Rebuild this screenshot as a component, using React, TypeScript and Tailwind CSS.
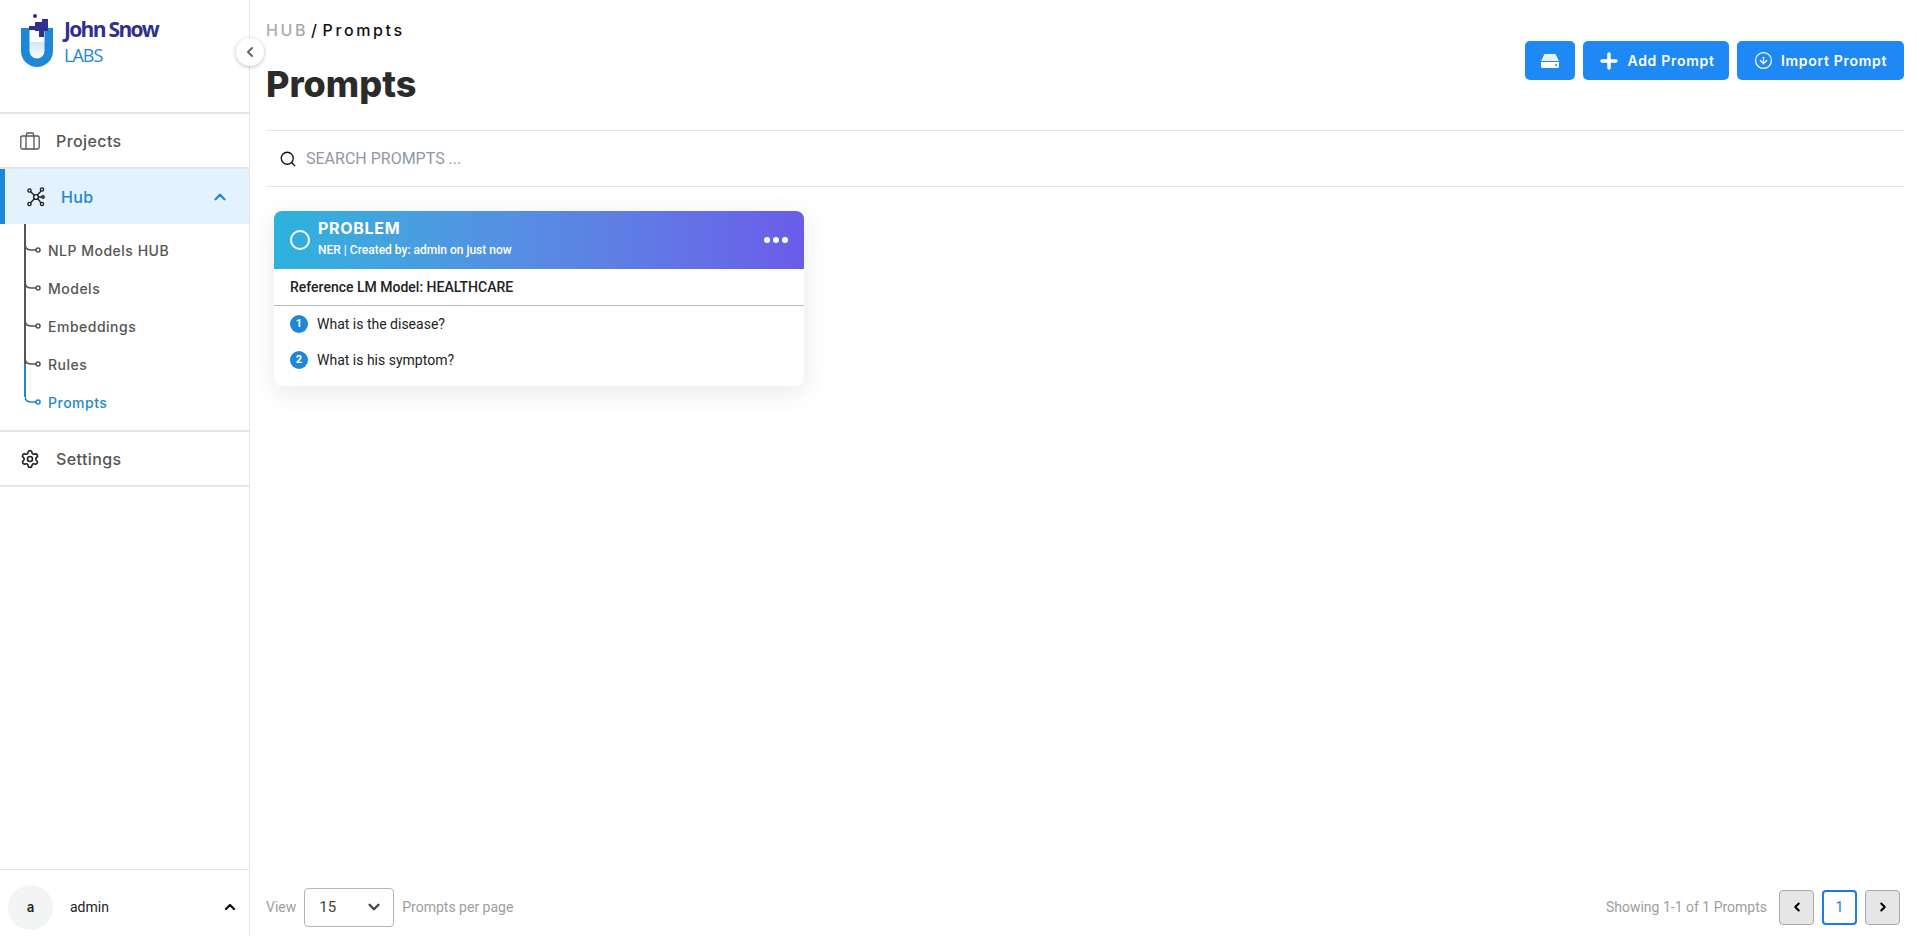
import { ChevronDown, ChevronLeft, ChevronRight, ChevronUp, CircleArrowDown, Plus, Search, Settings } from "lucide-react";

const subItems = ["NLP Models HUB", "Models", "Embeddings", "Rules"];

const Logo = () => (
  <div className="flex items-start gap-[10px]">
    <svg width="34" height="54" viewBox="0 0 34 54" className="mt-[-1px]">
      <defs>
        <linearGradient id="tube" x1="0" y1="0" x2="0" y2="1">
          <stop offset="0" stopColor="#cfe8f8" />
          <stop offset="1" stopColor="#f3fafe" />
        </linearGradient>
      </defs>
      <rect x="9" y="28" width="16" height="14" fill="url(#tube)" />
      <path d="M1 14h8.5v23a7.5 7.5 0 0 0 15 0V14H33v23a16 16 0 0 1-32 0z" fill="#1e88d6" />
      <rect x="13" y="0" width="4" height="4" rx="2" fill="#2f2f8f" />
      <path d="M9 12h6V8h7V5h6v12h-4v6h-5v-6h-4v-1H9z" fill="#2f2f8f" />
    </svg>
    <div className="flex flex-col font-['Open_Sans',sans-serif]">
      <span className="mt-[1px] text-[21px] font-bold leading-[26px] tracking-[-1.7px] text-[#2f2f8f]">John Snow</span>
      <span className="mt-[1px] text-[18px] leading-[24px] tracking-[-1px] text-[#1e88d6]">LABS</span>
    </div>
  </div>
);

const HubIcon = () => (
  <svg width="18" height="20" viewBox="0 0 18 20" fill="none" stroke="#222" strokeWidth="1.4">
    <circle cx="9" cy="10" r="2.4" />
    <circle cx="2.5" cy="3.5" r="1.6" />
    <circle cx="15" cy="2.5" r="1.6" />
    <circle cx="2.5" cy="17" r="1.6" />
    <circle cx="15" cy="17" r="1.6" />
    <circle cx="16" cy="10" r="1.2" />
    <path d="M3.7 4.7 7.3 8.3M14.2 4 10.2 8M3.7 15.8 7.3 11.7M14 16 10.8 11.7M11.4 10H15" />
  </svg>
);

const BriefcaseIcon = () => (
  <svg width="20" height="18" viewBox="0 0 20 18" fill="none" stroke="#555" strokeWidth="1.3">
    <rect x="0.8" y="4" width="18.4" height="13" rx="1.5" />
    <path d="M6 17V4M14 17V4M6.5 4V2a1 1 0 0 1 1-1h5a1 1 0 0 1 1 1v2" />
  </svg>
);

const DriveIcon = () => (
  <svg width="18" height="14" viewBox="0 0 18 14">
    <path d="M3.5 0h11L18 7H0z" fill="#e8f1fb" />
    <path d="M0 8h18v4.5a1.5 1.5 0 0 1-1.5 1.5h-15A1.5 1.5 0 0 1 0 12.5z" fill="#fff" />
    <circle cx="15" cy="11" r="1" fill="#1e88f5" />
  </svg>
);

const TreeBranch = ({ active }: { active?: boolean }) => (
  <svg width="16" height="14" viewBox="0 0 16 14" fill="none" stroke={active ? "#1e88d6" : "#555"} strokeWidth="1.6" className="shrink-0">
    <path d="M0 1c0 4 2 6 6 6h5" />
    <circle cx="13" cy="7" r="2" fill="#fff" />
  </svg>
);

const App = () => {
  return (
    <div className="flex h-[936px] w-[1916px] overflow-hidden bg-white font-['Roboto',sans-serif]">
      <aside className="relative flex w-[250px] shrink-0 flex-col border-r border-[#e5e5e5]">
        <div className="h-[112px] shrink-0 pl-[20px] pt-[15px]">
          <Logo />
        </div>
        <button className="absolute right-[-15px] top-[38px] flex h-[28px] w-[28px] items-center justify-center rounded-full bg-white shadow-[0_1px_4px_rgba(0,0,0,0.25)]">
          <ChevronLeft size={16} strokeWidth={3} className="text-[#666]" />
        </button>
        <nav className="font-['Inter',sans-serif]">
          <div className="flex h-[57px] items-center gap-[16px] border-y-2 border-[#e5e5e5] pl-[20px] text-[16px] font-medium tracking-[0.4px] text-[#555]">
            <BriefcaseIcon />
            Projects
          </div>
          <div className="flex h-[55px] items-center border-l-[5px] border-[#1e88d6] bg-[#e3f2fd] pl-[22px] pr-[20px] text-[16px] font-medium tracking-[0.4px] text-[#1e88d6]">
            <HubIcon />
            <span className="ml-[16px] flex-1">Hub</span>
            <ChevronUp size={18} strokeWidth={3} />
          </div>
          <ul className="relative h-[206px] pt-[7px] text-[14px] font-medium tracking-[0.5px] text-[#555]">
            <span className="absolute left-[24px] top-0 h-[140px] w-[2px] bg-[#555]" />
            <span className="absolute left-[24px] top-[140px] h-[33px] w-[2px] bg-[#1e88d6]" />
            {subItems.map((item) => (
              <li key={item} className="flex h-[38px] items-center gap-[7px] pl-[25px]">
                <TreeBranch />
                {item}
              </li>
            ))}
            <li className="flex h-[38px] items-center gap-[7px] pl-[25px] text-[#1e88d6]">
              <TreeBranch active />
              Prompts
            </li>
          </ul>
          <div className="flex h-[57px] items-center gap-[16px] border-y-2 border-[#e5e5e5] pl-[20px] text-[16px] font-medium tracking-[0.4px] text-[#555]">
            <Settings size={20} className="text-[#222]" />
            Settings
          </div>
        </nav>
        <div className="mt-auto flex h-[67px] items-center border-t border-[#e5e5e5] pl-[8px] pr-[11px] pt-[8px]">
          <div className="flex h-[45px] w-[45px] items-center justify-center rounded-full bg-[#f3f4f4] text-[14px] font-medium text-[#222]">a</div>
          <span className="ml-[17px] flex-1 text-[14px] text-[#222]">admin</span>
          <ChevronUp size={16} strokeWidth={3.5} className="text-[#111]" />
        </div>
      </aside>

      <main className="flex min-w-0 flex-1 flex-col pl-[16px] pr-[12px]">
        <header className="flex h-[131px] shrink-0 justify-between border-b border-[#e1e4e8]">
          <div className="font-['Inter',sans-serif]">
            <div className="mt-[21px] flex gap-[3px] text-[16px] font-medium leading-[18px] tracking-[2.6px]">
              <span className="text-[#aaa]">HUB</span>
              <span className="text-[#111]">/</span>
              <span className="text-[#111]">Prompts</span>
            </div>
            <h1 className="mt-[23px] text-[36px] font-extrabold leading-[44px] text-[#2b2b2b]">Prompts</h1>
          </div>
          <div className="mt-[41px] flex h-[39px] gap-[8px] font-['Inter',sans-serif] text-[14px] font-semibold tracking-[0.7px] text-white">
            <button className="flex w-[50px] items-center justify-center rounded-[5px] bg-[#1e88f5]"><DriveIcon /></button>
            <button className="flex w-[146px] items-center justify-center gap-[6px] rounded-[5px] bg-[#1e88f5]"><Plus size={24} strokeWidth={3.5} />Add Prompt</button>
            <button className="flex w-[167px] items-center justify-center gap-[8px] rounded-[5px] bg-[#1e88f5]"><CircleArrowDown size={19} strokeWidth={1.6} />Import Prompt</button>
          </div>
        </header>

        <div className="flex h-[56px] shrink-0 items-center gap-[9px] border-b border-[#e1e4e8] pl-[13px]">
          <Search size={18} strokeWidth={1.7} className="text-[#111]" />
          <span className="text-[16px] text-[#8f98a6]">SEARCH PROMPTS ...</span>
        </div>

        <div className="flex-1 pl-[8px] pt-[24px]">
          <article className="w-[530px] overflow-hidden rounded-[8px] bg-white shadow-[0_6px_24px_rgba(60,70,100,0.12)]">
            <div className="flex h-[58px] items-center bg-gradient-to-r from-[#2bb3dc] to-[#6a5ce8] pl-[16px] pr-[16px] text-white">
              <span className="h-[20px] w-[20px] rounded-full border-2 border-white" />
              <div className="ml-[8px] flex-1 pb-[5px]">
                <div className="font-['Inter',sans-serif] text-[16px] font-bold leading-[20px] tracking-[0.7px]">PROBLEM</div>
                <div className="mt-[5px] text-[12px] font-medium leading-[14px]">NER | Created by: admin on just now</div>
              </div>
              <div className="flex gap-[3px]">
                <span className="h-[6px] w-[6px] rounded-full bg-white" />
                <span className="h-[6px] w-[6px] rounded-full bg-white" />
                <span className="h-[6px] w-[6px] rounded-full bg-white" />
              </div>
            </div>
            <div className="flex h-[37px] items-center border-b border-[#bbb] pl-[16px] text-[14px] font-medium text-[#222]">Reference LM Model: HEALTHCARE</div>
            <ul className="h-[80px] pl-[16px] text-[14px] text-[#222]">
              <li className="flex h-[36px] items-center gap-[9px]">
                <span className="flex h-[18px] w-[18px] items-center justify-center rounded-full bg-[#1e88d6] text-[11px] font-bold text-white">1</span>
                What is the disease?
              </li>
              <li className="flex h-[36px] items-center gap-[9px]">
                <span className="flex h-[18px] w-[18px] items-center justify-center rounded-full bg-[#1e88d6] text-[11px] font-bold text-white">2</span>
                What is his symptom?
              </li>
            </ul>
          </article>
        </div>

        <footer className="flex h-[67px] shrink-0 items-center justify-between pt-[9px] text-[14px] text-[#9e9e9e]">
          <div className="flex items-center">
            <span>View</span>
            <div className="ml-[8px] flex h-[39px] w-[90px] items-center justify-between rounded-[4px] border border-[#b5b5b5] pl-[14px] pr-[10px] text-[15px] text-[#444]">
              15
              <ChevronDown size={18} strokeWidth={3} className="text-[#444]" />
            </div>
            <span className="ml-[8px]">Prompts per page</span>
          </div>
          <div className="flex items-center pr-[4px]">
            <span className="mr-[12px]">Showing 1-1 of 1 Prompts</span>
            <button className="flex h-[35px] w-[35px] items-center justify-center rounded-[4px] border border-[#a8a8a8] bg-[#e6e6e6] text-black"><ChevronLeft size={14} strokeWidth={3.5} /></button>
            <button className="mx-[8px] flex h-[35px] w-[35px] items-center justify-center rounded-[4px] border-2 border-[#1e78e6] bg-white text-[#1e78e6]">1</button>
            <button className="flex h-[35px] w-[35px] items-center justify-center rounded-[4px] border border-[#a8a8a8] bg-[#e6e6e6] text-black"><ChevronRight size={14} strokeWidth={3.5} /></button>
          </div>
        </footer>
      </main>
    </div>
  );
};

export default App;
